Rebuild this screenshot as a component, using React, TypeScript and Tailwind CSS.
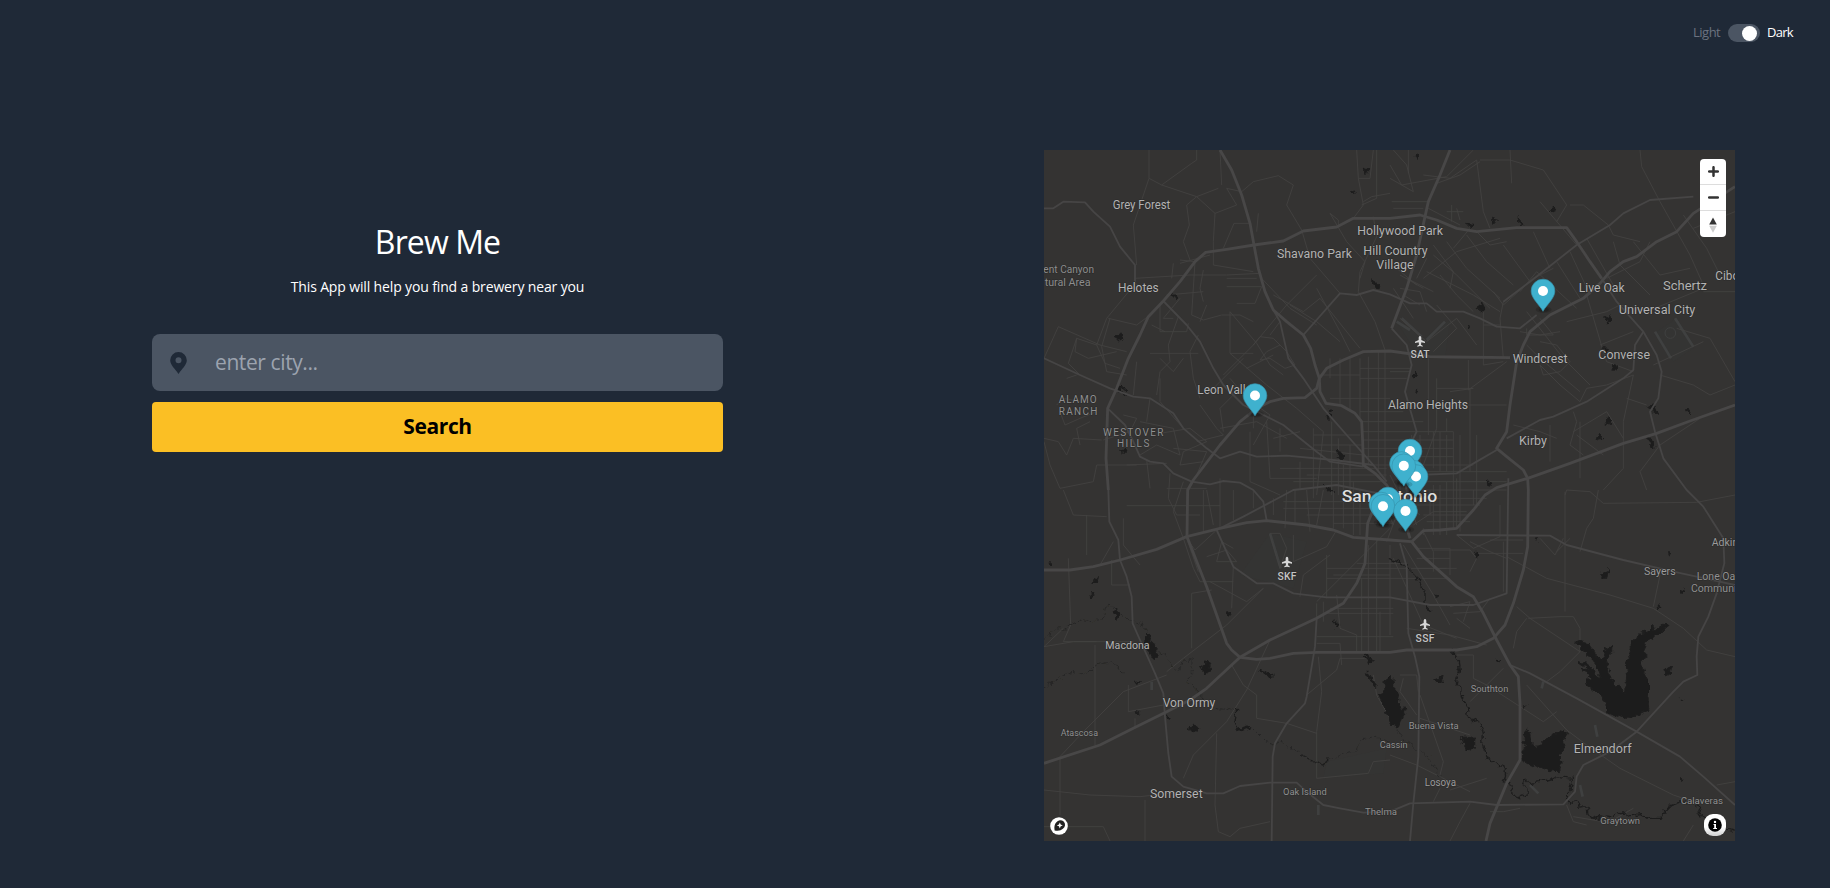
import React from "react";

const highways = [
  "M540 15L575 75L605 150L630 235L642 300L655 370L675 440L700 495L740 530L790 570L812 610L825 660L838 700L840 740L858 775L905 782L945 805L965 830L968 890L970 960L1005 985L1040 1020L1085 1100L1110 1180",
  "M205 1035L198 940L203 790L230 730L265 640L300 570L325 515L370 468L420 410L465 350L497 322L560 313L642 300L730 288L790 258L890 246L940 220L1050 220L1140 210L1190 225L1250 250L1310 260L1430 248L1580 248L1610 290L1650 350L1685 400",
  "M1410 638L1230 636L1170 635L1050 618L970 620L910 645L860 670L838 700L830 730L795 758L730 760L690 770L650 790L600 830L540 900L460 1005L443 1035L441 1175L500 1325L560 1495L575 1515L600 1537L650 1543L690 1540L760 1525L830 1522L1050 1522L1100 1515L1250 1515L1310 1505L1360 1480L1395 1440L1420 1375L1450 1275L1463 1205L1465 1035L1463 1000L1450 975L1400 935L1370 910L1400 860L1410 780L1430 650L1450 600L1470 560L1530 510L1630 460L1680 415L1710 380L1750 350L1790 335L1850 290L1910 260L1960 205L2085 125",
  "M2085 780L1950 828L1850 865L1750 895L1590 955L1463 1000L1370 1028L1335 1050L1300 1095L1250 1150L1200 1155L1150 1157L1115 1190L1050 1185L940 1177L880 1155L800 1140L680 1127L620 1133L540 1150L440 1175L350 1213L240 1245L160 1265L90 1275L12 1275",
  "M1115 1190L1150 1235L1250 1325L1300 1355L1330 1405L1370 1485L1410 1560L1435 1595L1440 1675L1440 1845L1400 1915L1350 2035L1338 2088",
  "M12 1855L180 1800L280 1750L380 1700L450 1665L500 1630L600 1537L690 1485L830 1420L910 1375L950 1315L975 1255L983 1135L1005 1080",
  "M1230 15L1200 90L1165 170L1155 215L1130 330L1100 430L1055 550",
];

const mainRoads = [
  "M205 1035L208 1130L235 1185L240 1245L260 1295L275 1355L278 1435L300 1485L345 1585L370 1645L375 1715L385 1825L395 1895L430 1925L500 1945L550 1945L600 1923L690 1913L770 1913L800 1940L850 1980L900 1990L970 2003L1050 2000L1110 1975L1290 1970L1370 1980L1570 1978L1605 1940L1610 1895L1630 1860L1710 1820L1790 1760L1900 1640L1930 1610L1972 1590L1970 1535L1975 1475L2005 1415L2030 1345L2053 1255L2050 1180L1990 1085L1940 1035L1870 940L1845 860L1830 800L1855 760L1865 680L1850 630L1810 560L1730 470L1685 400",
  "M1410 1560L1470 1585L1610 1660L1790 1760L1920 1835L1990 1895L2085 1980",
  "M830 1420L825 1505L800 1655L795 1675L740 1735L705 1795L698 1835L695 2088",
  "M1080 1195L1100 1265L1105 1465L1125 1535L1138 1595L1135 1835L1120 1975L1110 2088",
  "M370 468L440 540L480 590L520 670L550 720L610 780L730 840L830 920L870 950L970 965",
  "M12 190L40 190L70 170L135 172L160 200L210 245L240 305L285 360L285 410",
  "M12 640L120 690L210 730L280 755L330 760L400 805L430 850L500 910L540 940L600 920L650 935L740 932L880 945L1000 960",
  "M203 790L255 840L280 890L300 935L330 950L370 955L400 985L455 1010L510 1018L550 1008L600 1013L640 1035L670 1070L680 1127",
  "M790 570L900 445L950 450L1000 435L1050 448L1110 475L1160 475L1190 500L1270 500L1320 520L1370 545L1440 550L1490 510",
  "M700 495L720 530L745 640L790 700L850 790L920 870L1000 960L1040 1010",
  "M530 1155L580 1265L650 1315L700 1315L760 1345L860 1357L1050 1357L1170 1380L1300 1380L1400 1345L1405 1000",
  "M1250 1170L1530 1172L1580 1200L1750 1245L1900 1280L1970 1295L2085 1320",
  "M1130 990L1250 985L1310 950L1370 915",
  "M1055 550L1100 600L1115 660L1095 740L1130 860L1110 900L1090 990L1105 1060",
  "M1400 880L1500 825L1540 815L1640 770L1750 700L1780 675L1785 600L1810 560",
  "M540 1150L610 1115L760 1035L890 1020L1040 1050",
  "M1390 470L1470 410L1610 300L1710 240L1750 205L1830 165L1960 155",
];

const streets = [
  "M327 15V100L365 120L455 55L470 45V15M327 100L280 240L290 360M365 120L470 155L535 130M470 155L440 180L448 240L430 290L450 345M470 155L525 205L520 290M525 205L590 180L560 130L605 140L640 110L715 92L760 120L740 180L785 255M545 120L540 15M550 310L582 235L630 235M655 205L650 260M870 205L895 225V245",
  "M950 15L955 100L970 180L940 220M1000 15L990 100H955M1010 15V160L965 180M1050 60L1085 120L1220 95L1300 15M970 170L995 155L1050 145M1105 15V85M1000 215L1010 275L960 380L955 440L1005 530L1035 615",
  "M1310 45L1330 200L1350 250M1320 45H1410L1510 75L1580 180L1550 230M1410 15L1415 115M1150 90L1230 100L1310 45M1165 190L1260 240M1590 180L1630 180L1705 240L1720 270L1800 290M1800 15L1805 65L1860 170L1950 330L1990 420M1930 210L2000 310L2040 390M1990 220L2050 180M1960 250L2085 200",
  "M285 400L450 390H560L660 385M285 415L330 440M520 290V360L640 380M560 400H650M560 425H665L645 475H590M490 375L480 430L490 470M465 350L455 510L490 525L545 510H600L640 530M400 355L395 400M420 345L465 350M270 435L200 520L170 600L110 580L105 620L145 640L230 620",
  "M12 640L55 545L180 600L260 620M205 520L290 540L330 510M210 520L185 605L200 680L260 690M170 600L195 655L240 670M110 580L85 655L120 690M80 700L110 690M360 480V560H440L445 535M415 515L385 600L390 650L360 680L350 750M330 625H475M290 650L280 750M475 570L450 620L460 700L480 760",
  "M570 500V625H640M550 690L640 600L740 480L830 390M570 500L650 595L690 660L730 690M640 600L660 575L700 580L740 620L765 660L735 670L690 640L660 645L680 620L720 600M620 670L700 630M690 570L720 530M750 480L830 530L900 590M830 430L900 560L930 620M700 450L790 500L840 460L960 610",
  "M665 400L750 490L830 540M870 205L920 290L975 350L960 400M785 255L810 340L900 445M570 625L680 720L770 790L850 860M610 640L500 750M570 700L620 760L690 810L640 900M430 850L360 770V700M550 860L540 790L610 720M680 830L690 1000M630 860V1010L720 1050",
  "M50 780L70 760L120 770M60 800L75 840L120 820L170 800M12 880L55 890L80 930L100 880L185 885M12 890L30 960L60 1030L160 1010L170 960H290M120 900L110 850L150 830M190 885L270 860L290 820L250 810M300 830L400 850L420 930L350 900L300 930M330 760L320 830M260 960L380 955M400 910L500 920L470 990",
  "M360 865L450 850L500 890L430 920L420 960L490 950M320 945L330 1030M70 1035L100 1110L200 1115M140 1110V1230M250 1120L250 1200L300 1260M260 1082H540M490 1035V1160M540 1000V1150M390 985L385 1060L410 1110H480M380 1030H500M430 1010L400 1100L430 1180L460 1270L480 1310H580",
  "M85 1240L92 1440L70 1490L170 1490M70 1450L12 1505L100 1490L280 1490M165 1500V1800M180 1260L220 1190M215 1245V1320H270M265 1620V1700L370 1680M455 1510V1345L515 1335M380 1580L430 1540L560 1440L670 1330M60 2010V1835L130 1760L250 1640L380 1590M285 1720V1750",
  "M12 1935L150 1950L300 1955L430 1940M315 1965V2088M12 2045H190L210 2088M430 1900L460 1830L560 1730L620 1635L690 1485M530 1765L525 1980L535 2060L570 2075L600 2050L690 2030M575 1560L610 1620L650 1650V1720L740 1735L830 1765M800 1650L890 1575L900 1540H980M835 1535L845 1640L830 1760V1900L985 1885L1000 1850L1050 1845",
  "M530 1155L465 1215L440 1180L475 1280M500 1235L560 1215L590 1250H530L545 1190L580 1210M580 1265L575 1390M510 1310L620 1370L670 1330M690 1165H720L740 1210L720 1270L690 1170M760 1170V1250L860 1205L890 1155M830 1370L900 1300L1050 1150M780 1355L790 1290L870 1230M860 1360V1230",
  "M740 1035L735 1150M765 1035V1140M800 1035L810 1160M850 1035L830 1140M880 1035V1150M910 960V1150M940 1010V1170M960 1035V1170M730 1070H1060M730 1090H1060M800 1110H1060M880 1135H1060M820 870H960M820 900H970M780 910L970 930M770 970H1040M800 990H1040M760 1010H1030M820 850V1060M850 860L830 1050M875 830V1050M895 880V1050M930 900V1050",
  "M870 640V700M900 640V780M930 640V800M960 640V830M985 635V960M1015 620V980M1035 615V1020M1050 680H1110M960 670H1110M960 700H1100M840 690H960M870 760H1050M960 800H1090M965 830H1150M968 860H1240M970 885H1240M970 910H1240M970 935H1240M1000 960H1300M1060 980H1400M1080 1010H1400M1100 1035H1400M1110 1060H1340M1100 1080H1320",
  "M1190 700V850L1150 960M1165 640V870M1200 860V980M1240 860V1150M1260 870V1160M1290 730V980M1310 870V1090M1190 730H1300M1190 780H1400M1220 820V860M1180 1020V1170M1200 1020V1170M1220 1010V1170M1250 1000V1150M1150 1110H1290M1160 1130H1290M1120 1140L1180 1100H1280M1285 645V735L1400 650M1230 740L1300 730",
  "M860 1270H1250M860 1300H1230M950 1255H1100M880 1290H1050M830 1375V1420M850 1370V1430M870 1390H1060M860 1405H1060M830 1475H1060M830 1495H900L905 1560M965 1300V1522M985 1200V1520M1010 1180V1520M1020 1400L1020 1520M1050 1200V1470M890 1350L900 1450L950 1470V1522M1060 1240L1150 1440L1250 1480M1090 1200L1180 1350L1230 1440",
  "M1130 1210H1230V1290M1130 1240H1230M1130 1270H1220M1150 1160L1180 1220V1280M1180 1215H1290L1310 1240L1290 1280M1290 1190L1350 1220L1400 1240M1250 1170L1300 1210L1380 1175V1080M1310 1225H1450M1350 1185H1450M1390 1190V1340M1100 1450L1230 1470L1340 1500M1230 1385L1290 1370L1270 1430M1250 1420L1290 1450M1240 1405L1320 1400L1350 1360",
  "M1400 1235L1520 1300L1710 1350L1840 1390L1930 1450L2000 1515L2085 1535M1465 1420L1560 1415L1600 1415L1620 1450V1520L1560 1580L1520 1610M1460 1420L1430 1460L1420 1510M1430 1385L1470 1420L1620 1520M1575 1050L1580 1035L1650 1040L1690 1075L1970 1072L2085 1050M1575 1040V1400M1675 1035L1660 1120L1640 1150L1620 1220",
  "M1860 1290L1840 1385M1570 1180L1545 1230L1500 1180M1590 1180L1550 1220M1250 1530H1300V1600L1340 1620L1510 1730L1550 1700M1290 1670L1340 1620L1390 1570M1460 1620L1580 1755L1640 1800L1740 1870L1900 1950L1960 1970M1080 1590L1130 1590L1135 1640M1090 1600L1080 1640L1130 1710M1140 1650L1210 1850L1200 1890M1140 1720L1290 1770",
  "M1000 1590L1010 1650L1050 1720M1050 1830L1130 1860L1290 1940M1180 1970L1200 1930M1290 1975L1260 2030L1230 2088M1580 1980L1600 2030L1640 2040M1710 2030L1780 1990M1960 2040L1930 2088M1340 1900L1230 1935M2030 1920L2085 1910M1350 2000H1390L1440 1990M1600 2015L1720 2035",
  "M1390 470L1380 520L1390 640M1360 440L1390 480L1480 400L1540 370M1300 500L1250 450L1200 390M1350 490L1250 390L1180 330M1380 460L1280 370L1220 290M1420 420L1340 350L1280 270M1470 410L1390 300M1530 370L1480 260M1550 350L1620 460M1590 320L1650 450M1640 280L1720 420M1440 440L1490 380L1610 490M1150 400L1250 320L1380 280M1160 380L1300 450L1380 500",
  "M1080 430L1140 440L1160 500M1070 370L1130 420M1100 400L1180 440M1090 450L1140 480M1060 430L1120 520M1080 520L1160 590M1190 480L1250 550L1180 620M1160 590L1250 520L1310 600M1330 490V660L1390 650M1330 540H1380M1500 520L1540 570H1460V550M1460 500L1570 640L1650 720M1500 590L1550 600L1590 650L1560 680L1510 690L1500 660",
  "M1440 560L1500 570L1560 560M1460 600L1500 640L1620 740M1500 660L1560 720L1620 770L1640 730L1700 720L1780 690M1580 530L1700 500L1740 480M1640 450L1690 620M1680 600L1780 560M1690 620L1700 650L1780 680M1600 800L1610 830L1590 900L1630 930M1600 860L1700 800L1750 880M1760 760L1820 780M1780 690L1750 830V970L1690 1035",
  "M1620 1000V830M1550 880L1500 860L1420 840M1610 870L1690 930M1530 840V950M1860 690L1960 720L2010 750L2085 720M1840 660L1990 590M1990 440L2085 440M1910 550L2010 580L2085 710M1740 480L1820 500L1990 430M1720 290L1740 360L1830 450M1780 290L1860 390L1950 370M1830 290L1800 350L1700 400M1980 820L1860 900L1800 980L1820 1035",
  "M1500 170L1610 300M1190 115L1260 90L1320 50M1060 15L1100 60L1120 140L1050 100M1055 170H1170M1060 190H1150M1220 200H1270M1235 180V230M1250 190L1260 225M1310 260L1350 300L1400 290M1180 300L1240 380L1230 430M1290 250L1240 310M1080 390L1150 430M1160 340L1130 400",
  "M420 355L510 330M380 450L490 440M420 460L370 520H400M500 480L480 530M335 540L375 560M360 640L400 680L430 640M480 780L530 850L550 870L470 890M540 850L650 830L740 880M640 770V850M720 850V920M700 880L780 860M720 970H780M780 950V1030M690 1000H830M500 1035L520 1140M640 1035V1090M580 1035V1125M700 1060V1110",
  "M1300 1035V1080M1170 1035V1110M1150 1150V1170M1115 1090L1140 1110M1080 980V1060M1065 960L1110 1050M1050 990L1100 1090M1020 1040L1060 1140M1070 1110L1040 1190M1100 1050L1130 1140M1140 870V960M1115 870V950M1180 860V970M1220 870V980",
];

const creeks = [
  "M12 1480L50 1450L70 1455L110 1430L170 1425L190 1420L195 1390L210 1380L240 1410L310 1440L345 1510L390 1545L400 1570L415 1580L430 1545L460 1545L455 1580L440 1605L475 1640L520 1690L580 1695",
  "M12 1630L60 1600L90 1580L130 1590L170 1560L220 1550L250 1585",
  "M1050 1720L1090 1780L1170 1840L1200 1900",
  "M640 1750L680 1790L700 1800L720 1790L780 1825M860 1850L900 1830L950 1820L965 1785L1000 1775L1050 1790",
];

const rivers = [
  "M590 1695L585 1740L595 1755L620 1745L630 1750M780 1830L810 1845L850 1860L865 1840",
  "M1050 1240L1100 1265L1130 1295L1145 1320L1155 1345L1155 1380L1170 1400",
  "M1230 1510L1255 1545L1258 1580L1245 1610L1262 1630L1265 1660L1282 1690L1285 1715L1300 1730L1315 1725L1330 1760L1328 1800L1345 1840L1375 1860L1395 1865L1397 1895L1388 1910L1412 1918L1420 1950L1440 1958L1462 1945L1460 1925L1447 1920L1455 1900L1475 1915L1520 1905L1555 1895L1600 1900L1590 1915L1598 1930L1575 1950L1590 1975L1610 1970L1620 1990L1640 1985L1645 2010L1680 2020L1700 2010L1720 2015L1750 2000L1760 2015L1800 2005L1820 2020L1860 2020L1880 1990L1920 1970L1960 1975L1985 1990L1975 2010L2000 2020L2020 2040L2060 2050L2085 2055",
];

const lakes = [
  "M1605 1485L1645 1495L1665 1530L1690 1545L1700 1510L1716 1505L1715 1525L1700 1550L1707 1585L1715 1605L1740 1625L1757 1650L1760 1590L1755 1550L1770 1530L1775 1495L1800 1465L1825 1460L1840 1445L1845 1460L1875 1435L1881 1440L1865 1460L1845 1475L1820 1490L1808 1515L1825 1530L1805 1545L1812 1580L1822 1600L1822 1645L1827 1695L1765 1720L1735 1715L1700 1700L1700 1685L1685 1655L1665 1640L1640 1620L1635 1605L1655 1605L1640 1580L1622 1570L1650 1575L1615 1550L1640 1555L1670 1590L1685 1600L1670 1565L1640 1530Z",
  "M1452 1770L1460 1753L1472 1760L1475 1795L1493 1810L1512 1785L1525 1780L1540 1770L1570 1753L1582 1765L1570 1785L1575 1800L1560 1835L1565 1850L1555 1880L1520 1875L1480 1860L1450 1850L1447 1825L1455 1800Z",
  "M1046 1590L1058 1600L1062 1630L1080 1655L1077 1690L1100 1690L1090 1710L1075 1740L1055 1745L1045 1710L1020 1660L1014 1645L1035 1635L1032 1610L1046 1600Z",
  "M1265 1777H1305L1303 1810L1290 1815L1275 1812Z",
  "M1180 1605L1195 1600L1212 1590L1210 1605L1195 1613Z",
  "M480 1560L495 1562L502 1545L510 1560L508 1580L495 1587Z",
  "M315 1470L325 1465L330 1490L345 1510L355 1535L340 1545L330 1520L315 1495Z",
  "M220 1400L230 1395L237 1415L230 1425Z",
  "M445 1750L465 1740L480 1748L475 1758L455 1757Z",
  "M240 720L250 735L262 745L258 755L232 735Z",
  "M228 573L245 570L250 582L235 588Z",
  "M995 405L1015 418L1018 432L1005 428Z",
  "M890 918L905 925L918 935L905 940L892 932Z",
  "M970 70L985 75L980 85Z",
  "M935 140L943 138L945 150Z",
  "M397 450L408 450L405 462Z",
  "M242 910L258 915L250 925Z",
  "M1325 468L1335 490L1325 500L1312 490Z",
  "M1358 220L1372 225L1360 238Z",
  "M1280 235L1298 238L1290 248Z",
  "M1435 218L1445 235L1438 240Z",
  "M1530 195L1545 190L1540 205Z",
  "M1692 520L1710 512L1712 525L1700 530Z",
  "M1690 608L1705 610L1700 625Z",
  "M1720 665L1735 662L1730 675L1720 675Z",
  "M1822 785L1840 780L1855 808L1842 805Z",
  "M1695 822L1708 815L1712 835L1700 838Z",
  "M1668 885L1675 868L1688 885L1680 880Z",
  "M1823 880L1840 885L1845 910L1830 900Z",
  "M1940 800L1950 793L1948 808Z",
  "M1115 690L1128 685L1122 700Z",
  "M1125 738L1132 735L1130 745Z",
  "M1125 30L1140 25L1133 40Z",
  "M1282 540L1292 545L1288 552Z",
  "M1342 1010L1355 1015L1350 1025Z",
  "M868 790L878 793L870 803ZM862 808L872 810L868 820Z",
  "M850 1020L885 1045L870 1042Z",
  "M158 1310L175 1295L172 1310L160 1315Z",
  "M152 1340L162 1345L155 1358Z",
  "M26 1250L38 1255L30 1260Z",
  "M283 1605L302 1608L290 1615Z",
  "M286 1700L300 1702L292 1710Z",
  "M380 1708L390 1720L386 1726Z",
  "M880 1430L893 1435L888 1447Z",
  "M555 1405L567 1402L564 1412Z",
  "M1682 1285L1692 1290L1706 1268L1700 1300L1688 1300Z",
  "M1872 1575L1898 1562L1890 1585L1875 1593Z",
  "M1855 1385L1860 1377L1858 1395Z",
  "M1925 1332L1937 1338L1930 1346Z",
  "M1886 1220L1896 1225L1888 1230Z",
  "M1486 1180L1495 1178L1494 1192Z",
  "M1372 1543L1382 1546L1375 1551Z",
  "M1922 1662L1932 1664L1926 1670Z",
  "M1923 1902L1929 1900L1927 1912Z",
  "M1182 1350L1194 1352L1188 1357Z",
  "M1450 1683L1460 1680L1455 1688Z",
];

const labels: [string, number, number, number, number, string][] = [
  ["Grey Forest", 218, 192, 173, 36, "#b3b3b3"],
  ["Helotes", 234, 441, 122, 36, "#b3b3b3"],
  ["Shavano Park", 711, 340, 225, 36, "#b3b3b3"],
  ["Hollywood Park", 952, 270, 257, 36, "#b3b3b3"],
  ["Hill Country", 970, 330, 193, 36, "#b3b3b3"],
  ["Village", 1009, 372, 112, 36, "#b3b3b3"],
  ["ent Canyon", 10, 384, 152, 31, "#8d8d8d"],
  ["tural Area", 14, 423, 138, 31, "#8d8d8d"],
  ["Leon Valley", 472, 746, 180, 36, "#b3b3b3"],
  ["Live Oak", 1616, 440, 138, 36, "#b3b3b3"],
  ["Schertz", 1869, 434, 132, 36, "#b3b3b3"],
  ["Cibolo", 2026, 404, 100, 36, "#b3b3b3"],
  ["Universal City", 1736, 507, 230, 36, "#b3b3b3"],
  ["Windcrest", 1418, 654, 165, 36, "#b3b3b3"],
  ["Converse", 1675, 643, 155, 36, "#b3b3b3"],
  ["Alamo Heights", 1044, 792, 240, 36, "#b3b3b3"],
  ["Kirby", 1437, 899, 84, 36, "#b3b3b3"],
  ["Macdona", 196, 1511, 133, 33, "#b3b3b3"],
  ["Von Ormy", 368, 1686, 158, 36, "#b3b3b3"],
  ["Somerset", 330, 1958, 158, 36, "#b3b3b3"],
  ["Elmendorf", 1601, 1825, 174, 36, "#b3b3b3"],
  ["Atascosa", 62, 1773, 112, 28, "#919191"],
  ["Cassin", 1019, 1810, 84, 28, "#919191"],
  ["Oak Island", 729, 1949, 131, 28, "#919191"],
  ["Thelma", 975, 2010, 96, 28, "#919191"],
  ["Southton", 1292, 1640, 113, 28, "#919191"],
  ["Buena Vista", 1106, 1752, 150, 28, "#919191"],
  ["Losoya", 1154, 1923, 94, 30, "#9b9b9b"],
  ["Sayers", 1812, 1290, 95, 30, "#9b9b9b"],
  ["Adkins", 2015, 1204, 96, 30, "#9b9b9b"],
  ["Lone Oak", 1970, 1305, 132, 30, "#919191"],
  ["Community", 1953, 1340, 162, 30, "#919191"],
  ["Calaveras", 1922, 1976, 127, 28, "#919191"],
  ["Graytown", 1681, 2036, 119, 28, "#919191"],
];

const districts: [string, number, number, number][] = [
  ["ALAMO", 56, 774, 114],
  ["RANCH", 56, 809, 116],
  ["WESTOVER", 189, 872, 181],
  ["HILLS", 231, 907, 97],
];

const airports: [string, number, number, number][] = [
  ["SAT", 1140, 589, 640],
  ["SKF", 741, 1251, 1304],
  ["SSF", 1155, 1438, 1492],
];

const pins: [number, number][] = [
  [1543, 291],
  [1255, 395.5],
  [1410, 451],
  [1401.5, 463.5],
  [1413, 472],
  [1416, 476.5],
  [1403.8, 465.8],
  [1388, 499],
  [1381, 504],
  [1383, 506.3],
  [1405.5, 511],
];

function Pin({ x, y }: { x: number; y: number }) {
  return (
    <g transform={`translate(${(x - 1040) * 3} ${(y - 145) * 3})`}>
      <ellipse cx="2" cy="56" rx="24" ry="10" fill="#000" opacity=".14" />
      <ellipse cx="2" cy="56" rx="15" ry="6" fill="#000" opacity=".18" />
      <path d="M0 61C-5 51-15 41-25 27C-32 17-35.500 9-35.500 0A35.500 35.500 0 0 1 35.500 0C35.500 9 32 17 25 27C15 41 5 51 0 61Z" fill="#3fb1ce" stroke="#3593ac" strokeWidth="2" />
      <circle r="15" fill="#fff" />
    </g>
  );
}

function CityMap() {
  return (
    <svg className="block size-full" viewBox="12 15 2073 2073" fill="none" strokeLinejoin="round">
      <defs>
        <filter id="shoreline" x="0" y="0" width="2100" height="2100" filterUnits="userSpaceOnUse">
          <feTurbulence type="fractalNoise" baseFrequency="0.06" numOctaves="2" seed="4" result="noise" />
          <feDisplacementMap in="SourceGraphic" in2="noise" scale="22" xChannelSelector="R" yChannelSelector="G" />
        </filter>
      </defs>
      <path d="M1060 515L1150 580L1230 525L1215 640H1140ZM1850 560L1910 520L1965 605L1900 650ZM690 1165L800 1190L760 1330L600 1290ZM860 1850L1040 1810L1030 1885L850 1900Z" fill="#343433" />
      <path d="M1085 520L1145 575M1070 530L1110 555M1160 585L1215 530M1905 520L1960 605M1845 560L1893 640M690 1165L722 1270M335 1610V1635M835 1980V2010M1470 1920L1495 1945M1620 1920L1628 1955M1665 1740L1672 1775M1510 1610L1505 1630" stroke="#3f4040" strokeWidth="8" />
      <circle cx="1891" cy="564" r="16" stroke="#3f4040" strokeWidth="3" />
      <g stroke="#434241" strokeWidth="2.6">
        {streets.map((d) => <path key={d} d={d} />)}
      </g>
      <g filter="url(#shoreline)">
        <g stroke="#272726" strokeWidth="3" strokeDasharray="12 5">
          {creeks.map((d) => <path key={d} d={d} />)}
        </g>
        <g stroke="#1d1d1d" strokeWidth="4">
          {rivers.map((d) => <path key={d} d={d} />)}
        </g>
        <g fill="#1c1c1c" stroke="#1c1c1c" strokeWidth="3">
          {lakes.map((d) => <path key={d} d={d} />)}
        </g>
        <path d="M660 1580C675 1565 680 1600 700 1590M970 1540L1000 1550M980 1525L995 1555M980 1585L990 1600L1010 1625M1305 1220L1315 1225L1308 1232M595 1755L620 1745L632 1752" stroke="#1c1c1c" strokeWidth="8" />
      </g>
      <g stroke="#464545" strokeWidth="5.5">
        {mainRoads.map((d) => <path key={d} d={d} />)}
      </g>
      <g stroke="#484747" strokeWidth="8.5">
        {highways.map((d) => <path key={d} d={d} />)}
      </g>
      <g fontFamily="Roboto, sans-serif" stroke="#292929" strokeWidth="3" paintOrder="stroke">
        {labels.map(([t, x, y, w, s, c]) => (
          <text key={t} x={x} y={y} textLength={w} lengthAdjust="spacingAndGlyphs" fontSize={s} fill={c}>{t}</text>
        ))}
        {districts.map(([t, x, y, w]) => (
          <text key={t} x={x} y={y} textLength={w} fontSize="30" fill="#8f8f8f">{t}</text>
        ))}
        {airports.map(([t, x, , y]) => (
          <text key={t} x={x} y={y} textAnchor="middle" textLength="57" fontSize="31" fontWeight="500" fill="#c4c4c4">{t}</text>
        ))}
        <text x="905" y="1070" textLength="287" lengthAdjust="spacingAndGlyphs" fontSize="51" fontWeight="500" fill="#dedede">San Antonio</text>
      </g>
      {airports.map(([t, x, y]) => (
        <path key={t} transform={`translate(${x} ${y})`} d="M0-16C3-16 4-12 4-9V-4L15 1V5L4 3L3 10L8 13V16L0 14L-8 16V13L-3 10L-4 3L-15 5V1L-4-4V-9C-4-12-3-16 0-16Z" fill="#d6d6d6" />
      ))}
      {pins.map(([x, y]) => <Pin key={`${x}-${y}`} x={x} y={y} />)}
    </svg>
  );
}

export default function App() {
  return (
    <div className="flex h-[888px] w-full flex-col bg-[#1f2937] font-['Open_Sans',sans-serif] text-white">
      <header className="flex h-[66px] shrink-0 items-center justify-end pr-9 text-[13px]">
        <span className="w-[28px] tracking-[-0.5px] text-[#6b7280]">Light</span>
        <span className="mx-[7px] flex h-[18px] w-8 items-center justify-end rounded-full bg-[#4b5563] pr-[3px]">
          <span className="size-[15px] rounded-full bg-white" />
        </span>
        <span className="w-[27px] tracking-[-0.7px]">Dark</span>
      </header>
      <main className="flex grow items-start">
        <section className="ml-[152px] mt-[152px] flex w-[571px] flex-col items-center">
          <h1 className="text-[32px] leading-[48px] tracking-[-0.9px]">Brew Me</h1>
          <p className="mt-[11px] text-sm leading-5 tracking-[-0.14px]">This App will help you find a brewery near you</p>
          <div className="mt-[37px] flex h-[57px] w-full items-center rounded-lg bg-[#4b5563] pl-[18px]">
            <svg className="h-[22px] w-[17px] fill-[#1f2937]" viewBox="0 0 17 22">
              <path fillRule="evenodd" d="M8.5 0A8.300 8.300 0 0 0 0.200 8.300C0.200 12.800 5 17 8.500 22C12 17 16.800 12.800 16.800 8.300A8.300 8.300 0 0 0 8.500 0ZM8.500 5.300A3 3 0 1 1 8.500 11.300A3 3 0 1 1 8.500 5.300Z" />
            </svg>
            <input className="ml-7 grow bg-transparent text-[21px] tracking-[-0.4px] placeholder:text-[#9ca3af] outline-none" placeholder="enter city..." />
          </div>
          <button className="mt-[11px] h-[50px] w-full rounded bg-[#fbbf24] text-[21px] font-bold tracking-[-0.4px] text-black">Search</button>
        </section>
        <section className="relative ml-[321px] mt-[84px] size-[691px] overflow-hidden bg-[#343332]">
          <CityMap />
          <div className="absolute right-[9px] top-[9px] flex w-[26px] flex-col divide-y divide-[#ddd] overflow-hidden rounded bg-white">
            <button className="flex h-[26px] items-center justify-center">
              <svg className="size-[11px]" viewBox="0 0 11 11" stroke="#333" strokeWidth="2.500" strokeLinecap="round"><path d="M5.500 1.200V9.800M1.200 5.500H9.800" /></svg>
            </button>
            <button className="flex h-[26px] items-center justify-center">
              <svg className="size-[11px]" viewBox="0 0 11 11" stroke="#333" strokeWidth="2.500" strokeLinecap="round"><path d="M1.200 5.500H9.800" /></svg>
            </button>
            <button className="flex h-[26px] items-center justify-center pt-px">
              <svg className="h-[16px] w-[8px]" viewBox="0 0 8 16"><path d="M4 0.500L7.800 7.500H0.200Z" fill="#333" /><path d="M0.200 8.800H7.800L4 15.800Z" fill="#ccc" /></svg>
            </button>
          </div>
          <svg className="absolute bottom-[6px] left-[6px] size-[18px]" viewBox="0 0 18 18">
            <circle cx="9" cy="9" r="8.800" fill="#fff" />
            <path d="M4.600 13.400C4 9.800 4.500 7.200 6.400 5.300A4.700 4.700 0 1 1 12.900 11.800C11 13.600 8.200 14 4.600 13.400Z" fill="#222" />
            <path d="M9.800 5.400L10.700 7.500L12.800 8.400L10.700 9.300L9.800 11.400L8.900 9.300L6.800 8.400L8.900 7.500Z" fill="#fff" />
          </svg>
          <div className="absolute bottom-[5px] right-[9px] flex size-[22px] items-center justify-center rounded-[9px] bg-gradient-to-b from-white from-60% to-[#cfcfcf]">
            <svg className="size-[14px]" viewBox="0 0 14 14">
              <circle cx="7" cy="7" r="6.800" fill="#000" />
              <path d="M5.500 6H8V10H9V11H5.200V10H6.200V7H5.500Z" fill="#fff" />
              <circle cx="7" cy="3.900" r="1.200" fill="#fff" />
            </svg>
          </div>
        </section>
      </main>
    </div>
  );
}
